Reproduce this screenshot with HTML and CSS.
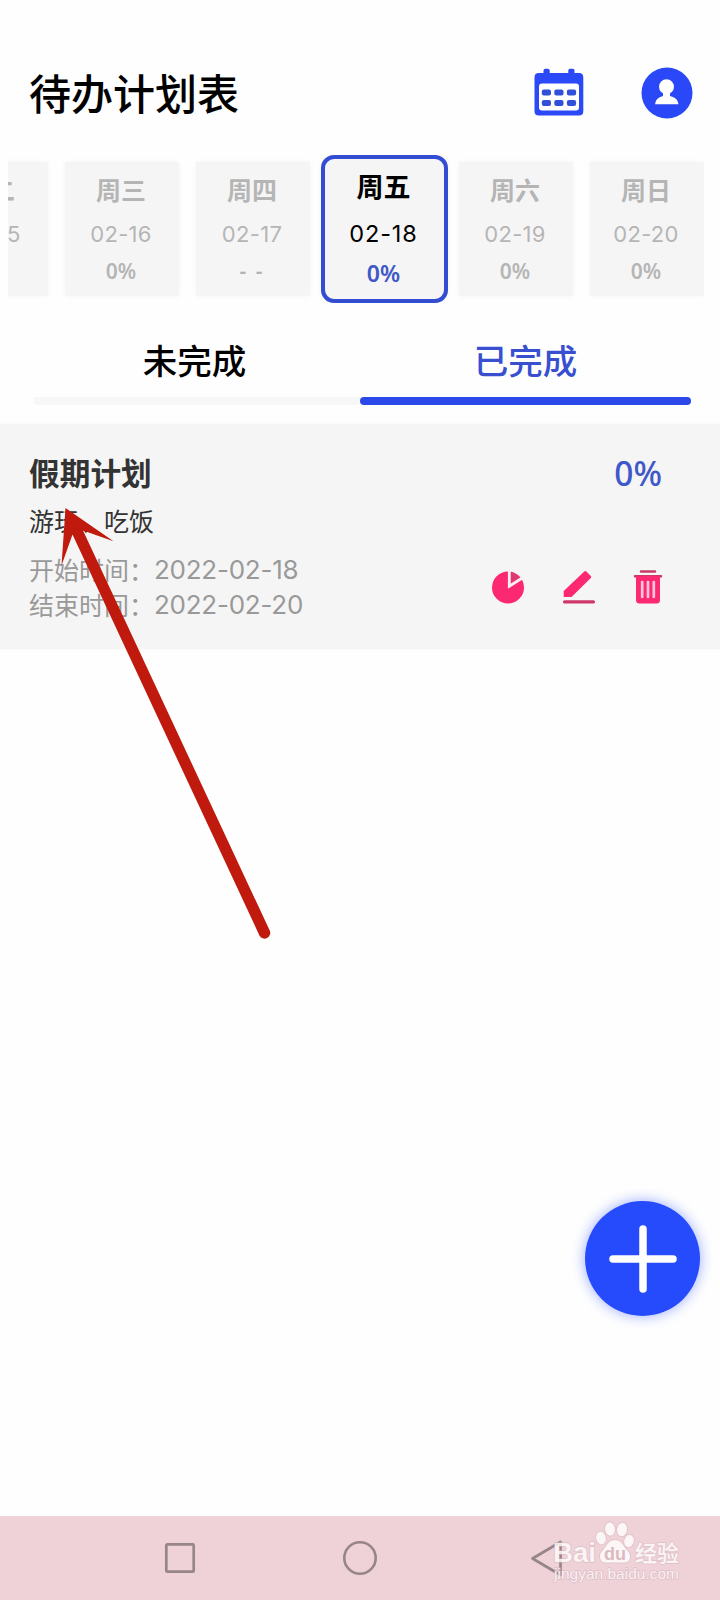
FILE: index.html
```html
<!DOCTYPE html>
<html lang="zh-CN">
<head>
<meta charset="utf-8">
<title>待办计划表</title>
<link rel="stylesheet" href="styles.css">
</head>
<body>
<div class="screen">
  <header class="header">
    <h1 class="title">待办计划表</h1>
    <div class="header-icons">
      <svg class="icon-calendar" width="50" height="48" viewBox="0 0 50 48">
        <path fill="#2b49f6" d="M9.500 5V2.500q0-1.800 1.800-1.800h2.600q1.800 0 1.800 1.800V5h18.600V2.500q0-1.800 1.800-1.800h2.600q1.800 0 1.800 1.800V5H45q4.300 0 4.300 4.300v33.900q0 4.300-4.300 4.300H4.800q-4.300 0-4.300-4.300V9.300Q.5 5 4.800 5z"/>
        <rect x="5" y="15.500" width="40" height="27" rx="3" fill="#fff"/>
        <g fill="#3150da"><rect x="7.800" y="21.500" width="9.200" height="6" rx="2"/><rect x="20.300" y="21.500" width="9.200" height="6" rx="2"/><rect x="32.900" y="21.500" width="9.200" height="6" rx="2"/><rect x="7.800" y="32" width="9.200" height="6" rx="2"/><rect x="20.300" y="32" width="9.200" height="6" rx="2"/><rect x="32.900" y="32" width="9.200" height="6" rx="2"/></g>
      </svg>
      <svg class="icon-user" width="52" height="52" viewBox="0 0 52 52">
        <circle cx="26" cy="26" r="25.500" fill="#2a48f8"/>
        <circle cx="25.500" cy="19.800" r="7.500" fill="#fff"/>
        <path fill="#fff" d="M22 25h7v4q8 2 8.500 8.200H14Q14.500 31 22 29z"/>
      </svg>
    </div>
  </header>

  <nav class="days">
    <div class="day"><b>周二</b><span>02-15</span><em>0%</em></div>
    <div class="day"><b>周三</b><span>02-16</span><em>0%</em></div>
    <div class="day"><b>周四</b><span>02-17</span><em class="none">- -</em></div>
    <div class="day active"><b>周五</b><span>02-18</span><em>0%</em></div>
    <div class="day"><b>周六</b><span>02-19</span><em>0%</em></div>
    <div class="day"><b>周日</b><span>02-20</span><em>0%</em></div>
  </nav>

  <div class="tabs">
    <div class="tab">未完成</div>
    <div class="tab selected">已完成</div>
  </div>

  <section class="plan">
    <div class="plan-head"><h2>假期计划</h2><strong>0%</strong></div>
    <p class="desc">游玩、吃饭</p>
    <div class="plan-foot">
      <div class="times">
        <p><span>开始时间：</span><time>2022-02-18</time></p>
        <p><span>结束时间：</span><time>2022-02-20</time></p>
      </div>
      <div class="actions">
        <svg width="34" height="34" viewBox="0 0 34 34">
          <circle cx="17" cy="17.500" r="16" fill="#fc2872"/>
          <path d="M18.300 0v16.200L32 7.500" fill="none" stroke="#f8f1f4" stroke-width="2.800"/>
          <path d="M20.300 2.200q5 .8 8 5l-8 4.800z" fill="#dc3a70"/>
        </svg>
        <svg width="34" height="34" viewBox="0 0 34 34">
          <path d="M22.300 1.500q1-.9 2 0l4.500 4.500q.9 1 0 2L9.500 27H1.700v-6z" fill="#fc2872"/>
          <rect x="1" y="30.200" width="32" height="3.300" rx="1.500" fill="#cf3768"/>
        </svg>
        <svg width="30" height="34" viewBox="0 0 30 34">
          <path d="M8 1.600h14M2 6.200h26" stroke="#c93a68" stroke-width="2.500" stroke-linecap="round"/>
          <path d="M3 6h24v24q0 3.500-3.500 3.500h-17Q3 33.500 3 30z" fill="#fc2872"/>
          <path d="M9.200 12v15M15 12v15M20.800 12v15" stroke="#ffc5da" stroke-width="2.700" stroke-linecap="round"/>
        </svg>
      </div>
    </div>
  </section>

  <div class="space">
    <button class="add" aria-label="添加">
      <svg width="68" height="68" viewBox="0 0 68 68"><path d="M34 4v60M4 34h60" stroke="#fff" stroke-width="7.500" stroke-linecap="round"/></svg>
    </button>
  </div>

  <footer class="navbar">
    <svg width="34" height="34" viewBox="0 0 34 34"><rect x="3.300" y="3.300" width="27.400" height="27.400" rx="1" fill="none" stroke="#978589" stroke-width="2.700"/></svg>
    <svg width="34" height="34" viewBox="0 0 34 34"><circle cx="17" cy="17" r="15.700" fill="none" stroke="#978589" stroke-width="2.600"/></svg>
    <svg width="34" height="38" viewBox="0 0 34 38"><path d="M30.500 3v33L2.500 19.500z" fill="none" stroke="#978589" stroke-width="2.700" stroke-linejoin="round"/></svg>
  </footer>

  <svg class="arrow" width="220" height="440" viewBox="55 500 220 440">
    <path d="M65.500 508L113.500 541.300 83 530.500 269.700 930.500A5.700 5.700 0 0 1 259.400 935.400L72.500 534.500 61.500 565.500z" fill="#bf1a0d"/>
  </svg>

  <svg class="watermark" width="150" height="70" viewBox="545 1520 150 70">
    <g fill="#fff" fill-opacity=".8" stroke="#d9b3bd" stroke-opacity=".65" stroke-width="1.400" paint-order="stroke">
      <text x="553" y="1562" class="wm-latin" font-size="27" textLength="43" lengthAdjust="spacingAndGlyphs">Bai</text>
      <ellipse cx="601" cy="1538" rx="4.800" ry="6.500" transform="rotate(-12 601 1538)"/>
      <ellipse cx="610" cy="1529" rx="5" ry="6.800" transform="rotate(-5 610 1529)"/>
      <ellipse cx="622" cy="1529.500" rx="5" ry="6.800" transform="rotate(8 622 1529.500)"/>
      <ellipse cx="629" cy="1541" rx="4.800" ry="6.300" transform="rotate(15 629 1541)"/>
      <path d="M615 1540c7 0 8 6 12 10 3 3 4 6 2.500 9.500-2 4.500-7 3-14.500 3s-12.500 1.500-14.500-3c-1.500-3.500-.5-6.500 2.500-9.500 4-4 5-10 12-10z"/>
      <text x="635" y="1561" class="wm-cjk" font-size="22" textLength="44" lengthAdjust="spacingAndGlyphs">经验</text>
      <text x="554" y="1578.500" class="wm-url" font-size="14" textLength="125" lengthAdjust="spacingAndGlyphs">jingyan.baidu.com</text>
    </g>
    <text x="604" y="1560" class="wm-latin" font-size="19" fill="#dbb9c1" textLength="22" lengthAdjust="spacingAndGlyphs">du</text>
  </svg>
</div>
</body>
</html>
```
FILE: styles.css
```css
* { box-sizing: border-box; margin: 0; padding: 0; }
body {
  background: #fefefe;
  font-family: Inter, "Noto Sans CJK SC", sans-serif;
}
svg { display: block; }
.screen {
  position: relative;
  width: 720px;
  height: 1600px;
  display: flex;
  flex-direction: column;
  overflow: hidden;
}
.header {
  height: 155px;
  padding: 64px 27px 0 29px;
  display: flex;
  justify-content: space-between;
}
.title {
  font: 500 42px/56px "Noto Sans CJK SC", sans-serif;
  color: #000;
}
.header-icons { display: flex; gap: 57px; }
.icon-calendar { margin-top: 4px; }
.icon-user { margin-top: 3px; }

.days {
  height: 148px;
  margin: 0 16px 0 8px;
  display: flex;
  justify-content: flex-end;
  align-items: center;
  gap: 17px;
  overflow: hidden;
}
.day {
  flex: none;
  width: 114px;
  height: 134px;
  padding-top: 9px;
  display: flex;
  flex-direction: column;
  align-items: center;
  background: #f5f5f5;
  box-shadow: 0 0 6px #f6f6f6;
  color: #b5b5b5;
  white-space: nowrap;
}
.day b { font: 700 25px/36px "Noto Sans CJK SC", sans-serif; transform: translateX(-1px); }
.day span { font-size: 22px; line-height: 32px; margin-top: 11px; letter-spacing: .3px; transform: translateX(-1px); }
.day em { font: 600 21px/28px "Noto Sans", sans-serif; margin-top: 7px; transform: translateX(-1px); }
.day .none { letter-spacing: 2px; }
.day.active {
  width: 127px;
  height: 148px;
  margin: 0 -6px;
  padding-top: 9px;
  border: 4px solid #324dd2;
  border-radius: 13px;
  color: #000;
}
.day.active b { font-size: 27px; }
.day.active span { font-size: 23.500px; margin-top: 14px; letter-spacing: .9px; }
.day.active em { color: #4058c8; font-size: 23px; margin-top: 9px; }

.tabs {
  height: 121px;
  padding: 33px 29px 0 33px;
  display: grid;
  grid-template-columns: 327px 331px;
}
.tab {
  height: 69px;
  text-align: center;
  font: 500 34.500px/46px "Noto Sans CJK SC", sans-serif;
  color: #000;
  border-radius: 4px;
  background: linear-gradient(#f7f7f7, #f7f7f7) bottom / 100% 8px no-repeat;
}
.tab:first-child { padding-right: 4px; }
.tab.selected { color: #3850d0; }
.tab.selected::after {
  content: "";
  display: block;
  height: 8px;
  margin-top: 15px;
  border-radius: 4px;
  background: #2b48e8;
}

.plan {
  height: 225px;
  padding: 25px 58px 0 29px;
  background: #f5f5f5;
  box-shadow: 0 0 4px #f7f7f7;
}
.plan-head { display: flex; justify-content: space-between; align-items: center; height: 46px; }
.plan-head h2 { font: 700 30.700px/46px "Noto Sans CJK SC", sans-serif; color: #333; }
.plan-head strong { font: 500 33.500px/46px "Noto Sans", sans-serif; color: #4058c8; padding-top: 1px; }
.desc { font: 400 25px/36px "Noto Sans CJK SC", sans-serif; color: #333; margin-top: 7px; }
.plan-foot { display: flex; justify-content: space-between; margin-top: 14px; }
.times { color: #999; }
.times p { display: flex; height: 35px; line-height: 35px; }
.times span { width: 125px; font-family: "Noto Sans CJK SC", sans-serif; font-size: 25px; white-space: nowrap; }
.times time { font-size: 26px; letter-spacing: -.25px; }
.actions { display: flex; gap: 37px; padding-top: 18px; margin-right: -1px; }

.space {
  flex: 1;
  display: flex;
  justify-content: flex-end;
  align-items: flex-end;
  padding: 0 20px 200px 0;
}
.add {
  width: 115px;
  height: 115px;
  border: 0;
  border-radius: 50%;
  background: #264bfd;
  box-shadow: 0 0 14px #9aabff;
  display: grid;
  place-items: center;
}
.navbar {
  height: 84px;
  background: #eed2d8;
  display: flex;
  align-items: center;
  padding-left: 163px;
  gap: 146px;
}
.navbar svg:last-child { margin-left: 7px; }

/* Annotation layers above the app */
.arrow { position: absolute; left: 55px; top: 500px; }
.watermark { position: absolute; left: 545px; top: 1520px; }
.wm-latin { font-family: "Liberation Sans", sans-serif; font-weight: 700; }
.wm-cjk { font-family: "Noto Sans CJK SC", sans-serif; font-weight: 700; }
.wm-url { font-family: "Liberation Sans", sans-serif; }
```
